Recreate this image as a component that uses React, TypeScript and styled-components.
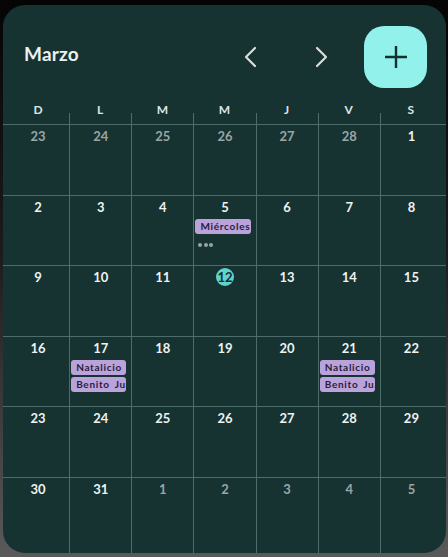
import React from "react";
import styled, { createGlobalStyle } from "styled-components";

const GlobalStyle = createGlobalStyle`
  html, body {
    margin: 0;
    padding: 0;
    width: 448px;
    height: 557px;
    overflow: hidden;
    background: linear-gradient(180deg, #050505 0%, #1b1b1b 45%, #5a5a5a 100%);
    font-family: Lato, "Noto Sans", sans-serif;
  }
`;

const Page = styled.div`
  padding: 5px 2px 0 3px;
`;

const Panel = styled.div`
  width: 443px;
  height: 548px;
  background: #163332;
  border-radius: 22px;
  overflow: hidden;
  display: flex;
  flex-direction: column;
`;

const Header = styled.div`
  height: 97px;
  display: flex;
  align-items: center;
  padding: 7px 19px 0 21px;
  box-sizing: border-box;
`;

const Title = styled.h1`
  flex: 1;
  margin: 0 0 8px;
  font-size: 19px;
  font-weight: 700;
  color: #ecf0ef;
  letter-spacing: 0.2px;
`;

const NavButton = styled.button<{ $gap: number }>`
  width: 40px;
  height: 40px;
  padding: 0;
  border: 0;
  background: transparent;
  display: flex;
  align-items: center;
  justify-content: center;
  cursor: pointer;
  margin-left: ${(p) => p.$gap}px;
`;

const AddButton = styled.button`
  width: 63px;
  height: 62px;
  margin-left: 22px;
  border: 0;
  border-radius: 20px;
  background: #93f1ec;
  display: flex;
  align-items: center;
  justify-content: center;
  cursor: pointer;
`;

const WeekHead = styled.div`
  display: grid;
  grid-template-columns: repeat(7, 1fr);
  padding: 0 4px;
  height: 22px;
`;

const DayName = styled.div<{ $first?: boolean }>`
  position: relative;
  text-align: center;
  font-size: 12px;
  font-weight: 700;
  color: #dfe5e4;
  line-height: 16px;
  &::before {
    content: "";
    display: ${(p) => (p.$first ? "none" : "block")};
    position: absolute;
    left: 0;
    bottom: 0;
    height: 11px;
    border-left: 1px solid #4d6d6b;
  }
`;

const Week = styled.div<{ $last?: boolean }>`
  display: grid;
  grid-template-columns: repeat(7, 1fr);
  padding: 0 4px;
  border-top: 1.5px solid #4d6d6b;
  height: ${(p) => (p.$last ? "auto" : "70.5px")};
  flex: ${(p) => (p.$last ? 1 : "none")};
  box-sizing: border-box;
`;

const Cell = styled.div<{ $first?: boolean }>`
  border-left: ${(p) => (p.$first ? "none" : "1.5px solid #4d6d6b")};
  display: flex;
  flex-direction: column;
  align-items: center;
  min-width: 0;
  overflow: hidden;
`;

const DayNum = styled.div<{ $muted?: boolean; $today?: boolean }>`
  margin-top: 2px;
  width: 18px;
  height: 18px;
  border-radius: 50%;
  display: flex;
  align-items: center;
  justify-content: center;
  font-size: 13px;
  font-weight: 700;
  background: ${(p) => (p.$today ? "#5fd3cc" : "transparent")};
  color: ${(p) => (p.$today ? "#10302e" : p.$muted ? "#9aa6a5" : "#eef2f1")};
`;

const Chip = styled.div`
  align-self: stretch;
  margin: 3px 5px 0 1px;
  height: 15px;
  border-radius: 3px;
  background: #baa3da;
  color: #2a1c3c;
  font-size: 10px;
  font-weight: 700;
  letter-spacing: 0.7px;
  word-spacing: 2px;
  line-height: 15px;
  padding-left: 5px;
  white-space: nowrap;
  overflow: hidden;
  & + & {
    margin-top: 2px;
  }
`;

const More = styled.div`
  align-self: flex-start;
  display: flex;
  gap: 1.5px;
  margin: 9px 0 0 4px;
`;

const Dot = styled.span`
  width: 4px;
  height: 4px;
  border-radius: 50%;
  background: #98a3a2;
`;

type Day = {
  n: number;
  muted?: boolean;
  today?: boolean;
  events?: string[];
  more?: boolean;
};

const weeks: Day[][] = [
  [23, 24, 25, 26, 27, 28].map((n) => ({ n, muted: true } as Day)).concat([{ n: 1 }]),
  [
    { n: 2 },
    { n: 3 },
    { n: 4 },
    { n: 5, events: ["Miércoles"], more: true },
    { n: 6 },
    { n: 7 },
    { n: 8 },
  ],
  [
    { n: 9 },
    { n: 10 },
    { n: 11 },
    { n: 12, today: true },
    { n: 13 },
    { n: 14 },
    { n: 15 },
  ],
  [
    { n: 16 },
    { n: 17, events: ["Natalicio de Benito Juárez", "Benito Juárez"] },
    { n: 18 },
    { n: 19 },
    { n: 20 },
    { n: 21, events: ["Natalicio de Benito Juárez", "Benito Juárez"] },
    { n: 22 },
  ],
  [23, 24, 25, 26, 27, 28, 29].map((n) => ({ n })),
  [{ n: 30 }, { n: 31 }].concat([1, 2, 3, 4, 5].map((n) => ({ n, muted: true }))),
];

const dayNames = ["D", "L", "M", "M", "J", "V", "S"];

const Chevron = ({ dir }: { dir: "left" | "right" }) => (
  <svg width="14" height="22" viewBox="0 0 14 22" fill="none">
    <polyline
      points={dir === "left" ? "12,2 3,11 12,20" : "2,2 11,11 2,20"}
      stroke="#d9dedd"
      strokeWidth="2.2"
      strokeLinecap="round"
      strokeLinejoin="round"
    />
  </svg>
);

export default function App() {
  return (
    <>
      <GlobalStyle />
      <Page>
        <Panel>
          <Header>
            <Title>Marzo</Title>
            <NavButton $gap={0}>
              <Chevron dir="left" />
            </NavButton>
            <NavButton $gap={32}>
              <Chevron dir="right" />
            </NavButton>
            <AddButton>
              <svg width="24" height="24" viewBox="0 0 24 24">
                <path
                  d="M12 1v22M1 12h22"
                  stroke="#12302e"
                  strokeWidth="2.4"
                />
              </svg>
            </AddButton>
          </Header>
          <WeekHead>
            {dayNames.map((d, i) => (
              <DayName key={i} $first={i === 0}>
                {d}
              </DayName>
            ))}
          </WeekHead>
          {weeks.map((week, wi) => (
            <Week key={wi} $last={wi === weeks.length - 1}>
              {week.map((day, di) => (
                <Cell key={di} $first={di === 0}>
                  <DayNum $muted={day.muted} $today={day.today}>
                    {day.n}
                  </DayNum>
                  {day.events?.map((e, ei) => (
                    <Chip key={ei}>{e}</Chip>
                  ))}
                  {day.more && (
                    <More>
                      <Dot />
                      <Dot />
                      <Dot />
                    </More>
                  )}
                </Cell>
              ))}
            </Week>
          ))}
        </Panel>
      </Page>
    </>
  );
}
